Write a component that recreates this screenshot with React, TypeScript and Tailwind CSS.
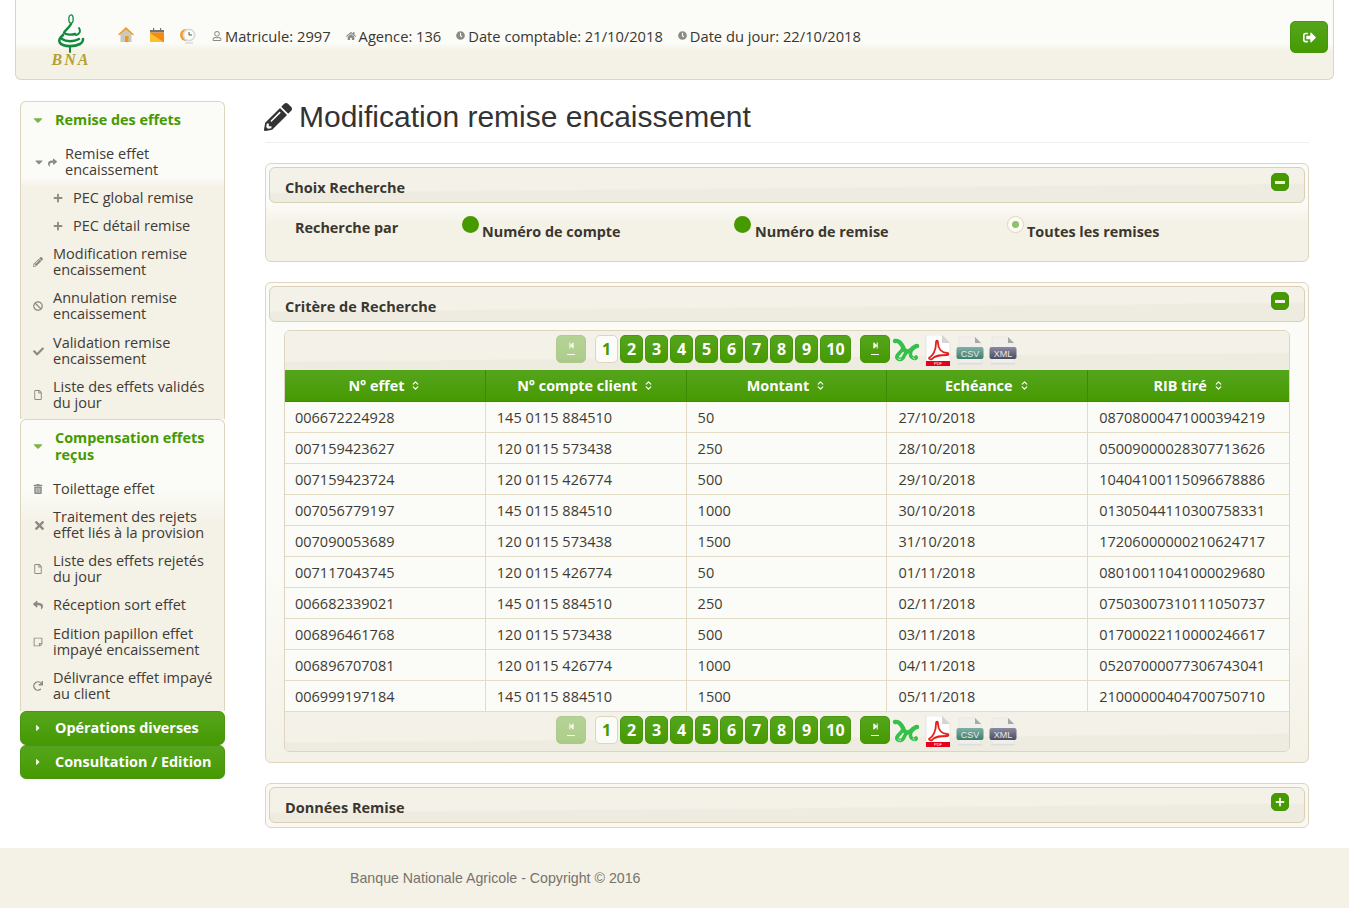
import React from "react";
import { ChevronsUpDown } from "lucide-react";
import {
  FaPencilAlt,
  FaBan,
  FaCheck,
  FaRegFile,
  FaTrashAlt,
  FaTimes,
  FaReply,
  FaShare,
  FaRedo,
  FaRegStickyNote,
  FaPlus,
  FaCaretDown,
  FaCaretRight,
  FaRegUser,
  FaHome,
  FaClock,
  FaSignOutAlt,
  FaStepBackward,
  FaStepForward,
} from "react-icons/fa";

const rows = [
  ["006672224928", "145 0115 884510", "50", "27/10/2018", "08708000471000394219"],
  ["007159423627", "120 0115 573438", "250", "28/10/2018", "05009000028307713626"],
  ["007159423724", "120 0115 426774", "500", "29/10/2018", "10404100115096678886"],
  ["007056779197", "145 0115 884510", "1000", "30/10/2018", "01305044110300758331"],
  ["007090053689", "120 0115 573438", "1500", "31/10/2018", "17206000000210624717"],
  ["007117043745", "120 0115 426774", "50", "01/11/2018", "08010011041000029680"],
  ["006682339021", "145 0115 884510", "250", "02/11/2018", "07503007310111050737"],
  ["006896461768", "120 0115 573438", "500", "03/11/2018", "01700022110000246617"],
  ["006896707081", "120 0115 426774", "1000", "04/11/2018", "05207000077306743041"],
  ["006999197184", "145 0115 884510", "1500", "05/11/2018", "21000000404700750710"],
];

const headers = ["N° effet", "N° compte client", "Montant", "Echéance", "RIB tiré"];

function Logo() {
  return (
    <div className="w-[40px] flex flex-col items-center">
      <svg width="30" height="39" viewBox="0 0 30 39" fill="none" stroke="#12893f" strokeLinecap="round">
        <ellipse cx="15" cy="5" rx="2.2" ry="4.2" strokeWidth="1.3" />
        <path d="M15 10C13 14 9 16 8 19c2 2 8 2 11 1" strokeWidth="2.4" />
        <path d="M7 21c-3 3-5 5-3 8 4 4 14 4 20 1 3-2 3-3 3-5" strokeWidth="2.6" />
        <path d="M6 25c4 3 12 3 17 0" strokeWidth="2.4" />
        <path d="M23 14c2 3 1 6-3 7" strokeWidth="2" />
        <path d="M14 33v5" strokeWidth="2" />
      </svg>
      <span className="font-['Liberation_Serif',serif] font-bold italic text-[16px] leading-[13px] tracking-[2px] text-[#b5a030]">BNA</span>
    </div>
  );
}

function HomeIcon() {
  return (
    <svg width="16" height="20" viewBox="0 0 16 20">
      <path d="M8 2L1 9h1.5v7h11V9H15z" fill="#c9c9c4" />
      <path d="M8 1L0 8.5l1 .8L8 3.5l7 5.8 1-.8z" fill="#f59a1e" />
      <rect x="7" y="10" width="3.5" height="6" fill="#f5951a" />
    </svg>
  );
}

function CalendarIcon() {
  return (
    <svg width="16" height="20" viewBox="0 0 16 20">
      <defs>
        <linearGradient id="cal" x1="0" y1="1" x2="1" y2="0">
          <stop offset="0.45" stopColor="#fbc02d" />
          <stop offset="0.5" stopColor="#f58a0f" />
        </linearGradient>
      </defs>
      <rect x="1" y="4" width="14" height="2.5" fill="#77736c" />
      <rect x="4" y="2" width="1.2" height="2" fill="#77736c" />
      <rect x="11" y="2" width="1.2" height="2" fill="#77736c" />
      <rect x="1" y="6.5" width="14" height="9.5" fill="url(#cal)" />
    </svg>
  );
}

function ClockIcon() {
  return (
    <svg width="16" height="20" viewBox="0 0 16 20">
      <circle cx="6" cy="9" r="6" fill="#f59a1e" />
      <circle cx="9" cy="9" r="6.5" fill="#d7dadd" />
      <circle cx="9" cy="9" r="4.8" fill="#fbfbf7" />
      <path d="M9 6v3h3" stroke="#555" strokeWidth="1" fill="none" />
      <path d="M5 17h8" stroke="#d7dadd" strokeWidth="1.5" />
    </svg>
  );
}

function ExcelIcon() {
  return (
    <svg width="28" height="27" viewBox="0 0 28 27" fill="none">
      <path d="M3 4c4-1 6 2 8 6 1 4 4 6 8 3 2-2 4-4 6-4" stroke="#35c04a" strokeWidth="4.4" strokeLinecap="round" />
      <path d="M10 13c-2 3-4 4-5 6-1 3 3 4 5 3 2-1 2-4 4-6" stroke="#35c04a" strokeWidth="3.6" strokeLinecap="round" />
      <path d="M19 14c-1 3-1 6 2 7 2 1 4 0 3-1" stroke="#35c04a" strokeWidth="3.6" strokeLinecap="round" />
      <path d="M6 21c0 1 1 2 3 1M21 20c0 1 1 2 2 2" stroke="#caf3c8" strokeWidth="1" />
    </svg>
  );
}

function PdfIcon() {
  return (
    <svg width="26" height="31" viewBox="0 0 26 31">
      <path d="M1 0h16l8 8v23H1z" fill="#fff" stroke="#d8d8d8" strokeWidth="0.6" />
      <path d="M17 0l8 8h-8z" fill="#d5d5d5" />
      <path d="M4 23c4-2 7-8 7-15 0-3 2-3 2 0 0 6 4 10 9 10 2 0 2 2 0 2-6 0-12 0-15 4-1 1-3 0-3-1z" fill="none" stroke="#e3211c" strokeWidth="1.8" />
      <rect x="1" y="26" width="24" height="5" fill="#e3001b" />
      <text x="13" y="30.3" textAnchor="middle" fontSize="4" fontFamily="Liberation Sans, sans-serif" fill="#fff">PDF</text>
    </svg>
  );
}

function FileTag({ label, top, bottom }: { label: string; top: string; bottom: string }) {
  return (
    <svg width="28" height="30" viewBox="0 0 28 30">
      <defs>
        <linearGradient id={label} x1="0" y1="0" x2="0" y2="1">
          <stop offset="0" stopColor={top} />
          <stop offset="1" stopColor={bottom} />
        </linearGradient>
      </defs>
      <path d="M3 1h16l6 6v20H3z" fill="#f0efec" stroke="#ddd" strokeWidth="0.5" />
      <path d="M19 1l6 6h-6z" fill="#a8a8a8" />
      <rect x="0.5" y="11" width="27" height="12" rx="2" fill={`url(#${label})`} />
      <text x="14" y="20.5" textAnchor="middle" fontSize="9" fontFamily="Liberation Sans, sans-serif" fill="#e8e8e8">{label}</text>
      <rect x="2" y="27" width="24" height="1.5" fill="#ddd" />
    </svg>
  );
}

function Pager() {
  const btn = "h-[28px] rounded-[5px] border border-[#4a9510] bg-gradient-to-b from-[#55a51b] to-[#469a00] flex items-center justify-center text-white font-bold text-[16px]";
  return (
    <div className="h-full flex items-center justify-center pb-[4px] bg-[linear-gradient(179.5deg,#f4f1e8_62%,#eeebe0_66%)]">
      <div className={`${btn} w-[30px] opacity-40 flex-col mr-[9px]`}>
        <FaStepBackward className="text-[7px]" />
        <span className="w-[8px] h-px bg-white mt-[5px]" />
      </div>
      <div className="w-[23px] h-[28px] rounded-[5px] border border-[#ddd5bf] bg-[#fbfbf7] text-[#469a00] font-bold text-[16px] flex items-center justify-center mr-[2px]">1</div>
      <div className="flex gap-[2px]">
        {["2", "3", "4", "5", "6", "7", "8", "9"].map((n) => (
          <div key={n} className={`${btn} w-[23px]`}>{n}</div>
        ))}
        <div className={`${btn} w-[31px]`}>10</div>
      </div>
      <div className={`${btn} w-[30px] flex-col ml-[9px] mr-[3px]`}>
        <FaStepForward className="text-[7px]" />
        <span className="w-[8px] h-px bg-white mt-[5px]" />
      </div>
      <div className="flex items-center gap-[5px] mt-[4px] -ml-[1px] mr-[1px]">
        <ExcelIcon />
        <PdfIcon />
        <FileTag label="CSV" top="#7fb0a6" bottom="#3f7d70" />
        <FileTag label="XML" top="#8b8aa0" bottom="#4d4b60" />
      </div>
    </div>
  );
}

function PanelHead({ title, open }: { title: string; open: boolean }) {
  return (
    <div className="relative h-[36px] m-[3px] mb-0 rounded-[6px] border border-[#d9d0b5] bg-[linear-gradient(179.5deg,#f4f1e8_55%,#eeebe0_60%)] flex items-center pl-[15px] pt-[5px]">
      <span className="font-bold text-[14.5px] text-[#3a3630]">{title}</span>
      <div className="absolute right-[15px] top-[5px] w-[18px] h-[18px] rounded-[5px] border border-[#4a9510] bg-[#469a00] flex items-center justify-center">
        {open ? <span className="w-[10px] h-[3px] bg-[#f4f1e6]" /> : <FaPlus className="text-[#f4f1e6] text-[10px]" />}
      </div>
    </div>
  );
}

function SideItem({ icon, text, sub }: { icon: React.ReactNode; text: string; sub?: boolean }) {
  return (
    <div className={`flex items-center ${sub ? "pl-[32px] h-[28px]" : "pl-[12px] py-[6px]"}`}>
      <span className="w-[20px] shrink-0 text-[#8b8b86] text-[10px]">{icon}</span>
      <span className="text-[14.5px] leading-[16px] text-[#3f3b36]">{text}</span>
    </div>
  );
}

export default function App() {
  return (
    <div className="bg-white min-h-[908px] font-['Open_Sans',sans-serif] text-[#333]">
      <header className="mx-[15px] h-[80px] rounded-b-[6px] border border-t-0 border-[#ddd5bf] bg-gradient-to-b from-[#fbfbf7] from-[55%] to-[#f4f1e6] to-[65%] flex items-center pl-[35px] pr-[5px]">
        <Logo />
        <div className="flex items-center ml-[27px] gap-[15px] -mt-[7px]">
          <HomeIcon />
          <CalendarIcon />
          <ClockIcon />
        </div>
        <div className="flex items-center gap-[15px] ml-[16px] -mt-[7px] text-[14.7px] text-[#3a3630]">
          <span className="flex items-center gap-[3px]"><FaRegUser className="text-[#8b8b86] text-[10px]" />Matricule: 2997</span>
          <span className="flex items-center gap-[3px]"><FaHome className="text-[#8b8b86] text-[10px]" />Agence: 136</span>
          <span className="flex items-center gap-[3px]"><FaClock className="text-[#8b8b86] text-[9px]" />Date comptable: 21/10/2018</span>
          <span className="flex items-center gap-[3px]"><FaClock className="text-[#8b8b86] text-[9px]" />Date du jour: 22/10/2018</span>
        </div>
        <div className="ml-auto -mt-[5px] w-[38px] h-[32px] rounded-[5px] border border-[#4a9510] bg-gradient-to-b from-[#55a51b] to-[#469a00] flex items-center justify-center text-white text-[13px]">
          <FaSignOutAlt />
        </div>
      </header>

      <div className="flex mt-[21px]">
        <aside className="w-[205px] ml-[20px] shrink-0">
          <div className="rounded-t-[6px] border border-b-0 border-[#ddd5bf] bg-gradient-to-b from-[#fbfbf7] from-[75px] to-[#f4f1e6] to-[85px] h-[318px]">
            <div className="flex items-center h-[35px] pl-[12px]">
              <FaCaretDown className="text-[#7cb342] w-[10px] h-[14px] mr-[12px]" />
              <span className="font-bold text-[14.4px] text-[#469a00]">Remise des effets</span>
            </div>
            <div className="flex items-center pl-[14px] pt-[9px] pb-[6px]">
              <FaCaretDown className="text-[#8b8b86] w-[8px] h-[12px] mr-[5px] shrink-0" />
              <FaShare className="text-[#8b8b86] w-[9px] h-[9px] mr-[8px] shrink-0" />
              <span className="text-[14.5px] leading-[16px] text-[#3f3b36]">Remise effet encaissement</span>
            </div>
            <SideItem sub icon={<FaPlus />} text="PEC global remise" />
            <SideItem sub icon={<FaPlus />} text="PEC détail remise" />
            <SideItem icon={<FaPencilAlt />} text="Modification remise encaissement" />
            <div className="pb-[1px]">
              <SideItem icon={<FaBan />} text="Annulation remise encaissement" />
            </div>
            <SideItem icon={<FaCheck className="text-[11px]" />} text="Validation remise encaissement" />
            <SideItem icon={<FaRegFile />} text="Liste des effets validés du jour" />
          </div>
          <div className="rounded-t-[6px] border border-b-0 border-[#ddd5bf] bg-gradient-to-b from-[#fbfbf7] from-[70px] to-[#f4f1e6] to-[105px] h-[292px]">
            <div className="flex items-center pl-[12px] pt-[9px] pb-[9px]">
              <FaCaretDown className="text-[#7cb342] w-[10px] h-[14px] mr-[12px] shrink-0" />
              <span className="font-bold text-[14.4px] leading-[17px] text-[#469a00]">Compensation effets reçus</span>
            </div>
            <div className="pt-[3px]">
              <SideItem icon={<FaTrashAlt />} text="Toilettage effet" />
              <SideItem icon={<FaTimes className="text-[13px]" />} text="Traitement des rejets effet liés à la provision" />
              <SideItem icon={<FaRegFile />} text="Liste des effets rejetés du jour" />
              <div className="pb-[1px]">
                <SideItem icon={<FaReply />} text="Réception sort effet" />
              </div>
              <SideItem icon={<FaRegStickyNote />} text="Edition papillon effet impayé encaissement" />
              <SideItem icon={<FaRedo />} text="Délivrance effet impayé au client" />
            </div>
          </div>
          {["Opérations diverses", "Consultation / Edition"].map((t) => (
            <div key={t} className="h-[34px] rounded-[6px] border border-[#4a9510] bg-gradient-to-b from-[#55a51b] to-[#469a00] flex items-center pl-[12px] text-white font-bold text-[14.4px]">
              <FaCaretRight className="text-[10px] w-[22px] pr-[12px] shrink-0" />
              {t}
            </div>
          ))}
        </aside>

        <main className="w-[1044px] ml-[40px]">
          <div className="h-[42px] border-b border-[#eee] flex items-center gap-[7px] font-['Liberation_Sans',sans-serif] text-[#333] text-[30px]">
            <FaPencilAlt className="text-[28px] -ml-[1px] -mt-[10px]" />
            <span className="-mt-[11px]">Modification remise encaissement</span>
          </div>

          <section className="mt-[20px] h-[99px] rounded-[6px] border border-[#ddd5bf] bg-gradient-to-b from-[#fbfbf7] from-[40px] to-[#f4f1e6] to-[60px]">
            <PanelHead title="Choix Recherche" open />
            <div className="relative font-bold text-[14.4px] text-[#3a3630]">
              <span className="absolute left-[29px] top-[14px]">Recherche par</span>
              <span className="absolute left-[196px] top-[13px] w-[17px] h-[17px] rounded-full bg-[#469a00]" />
              <span className="absolute left-[216px] top-[18px]">Numéro de compte</span>
              <span className="absolute left-[468px] top-[13px] w-[17px] h-[17px] rounded-full bg-[#469a00]" />
              <span className="absolute left-[489px] top-[18px]">Numéro de remise</span>
              <span className="absolute left-[741px] top-[13px] w-[17px] h-[17px] rounded-full border border-[#ddd5bf] bg-[#fbfbf7] flex items-center justify-center">
                <span className="w-[7px] h-[7px] rounded-full bg-[#8dc26a]" />
              </span>
              <span className="absolute left-[761px] top-[18px]">Toutes les remises</span>
            </div>
          </section>

          <section className="mt-[20px] h-[481px] rounded-[6px] border border-[#ddd5bf] bg-gradient-to-b from-[#fbfbf7] from-[60%] to-[#f4f1e6]">
            <PanelHead title="Critère de Recherche" open />
            <div className="mx-[18px] mt-[8px] rounded-[6px] border border-[#ddd5bf] overflow-hidden">
              <div className="h-[39px]">
                <Pager />
              </div>
              <table className="w-full table-fixed border-separate border-spacing-0">
                <thead>
                  <tr className="h-[32px] text-white text-[14.4px] font-bold">
                    {headers.map((h) => (
                      <th key={h} className="bg-gradient-to-b from-[#55a51b] to-[#469a00] border-b border-r border-[#3f8a05] last:border-r-0 pt-[1px]">
                        <span className="inline-flex items-center gap-[6px]">
                          {h} <ChevronsUpDown size={11} strokeWidth={2.5} />
                        </span>
                      </th>
                    ))}
                  </tr>
                </thead>
                <tbody>
                  {rows.map((r) => (
                    <tr key={r[0]} className="h-[31px] text-[14.5px] text-[#3f3b36]">
                      {r.map((c, i) => (
                        <td key={i} className="pl-[11px] first:pl-[10px] pt-[1px] bg-[#fbfbf7] border-b border-r border-[#e2dbc6] last:border-r-0">{c}</td>
                      ))}
                    </tr>
                  ))}
                </tbody>
              </table>
              <div className="h-[39px]">
                <Pager />
              </div>
            </div>
          </section>

          <section className="mt-[20px] h-[45px] rounded-[6px] border border-[#ddd5bf] bg-[#f9f8f2]">
            <PanelHead title="Données Remise" open={false} />
          </section>
        </main>
      </div>

      <footer className="mt-[20px] h-[60px] bg-[#f4f1e6] flex items-center pl-[350px] pt-[1px] font-['Liberation_Sans',sans-serif] text-[14.2px] text-[#77736c]">
        Banque Nationale Agricole - Copyright © 2016
      </footer>
    </div>
  );
}
